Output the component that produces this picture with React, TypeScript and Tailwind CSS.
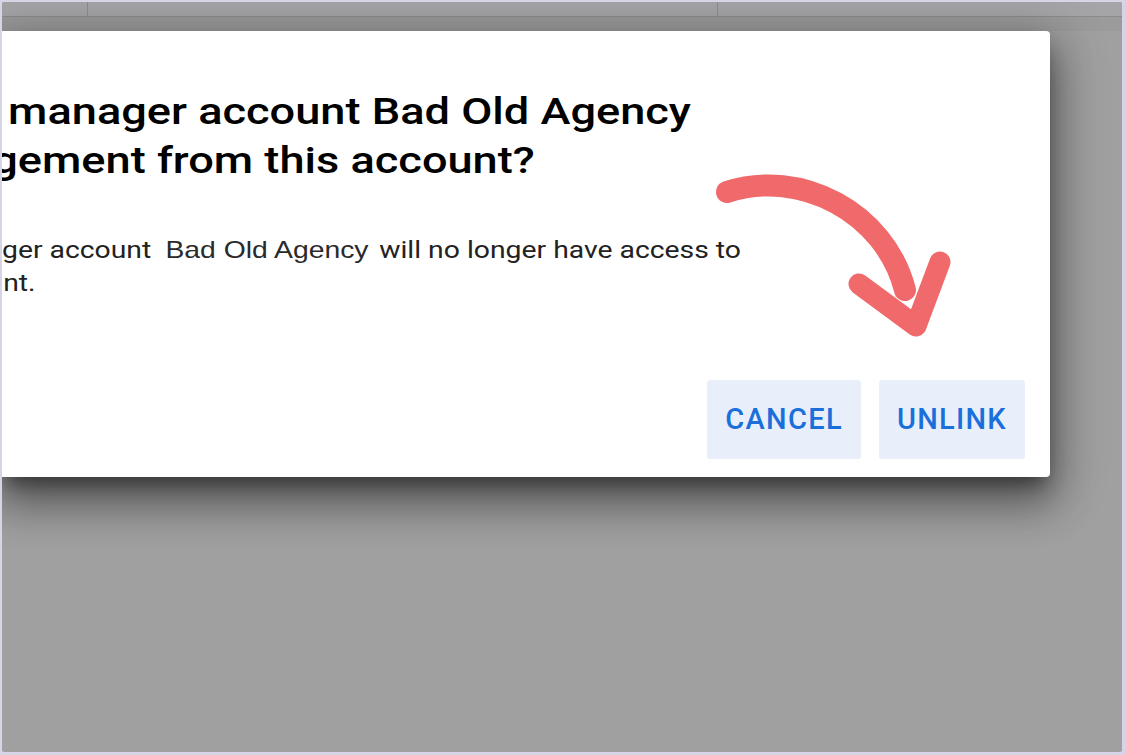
import React from "react";

const roboto = { fontFamily: "Roboto, 'Noto Sans', sans-serif" };

const ActionButton = ({ label }: { label: string }) => (
  <button className="h-[79px] px-[18px] flex items-center rounded-[3px] bg-[#e8effb] text-[#1b6fdb] text-[29px] font-medium tracking-[1.3px]">
    {label}
  </button>
);

const CurvedArrow = () => (
  <svg
    className="absolute left-0 top-0 pointer-events-none"
    width="1125"
    height="755"
    viewBox="0 0 1125 755"
    fill="none"
    aria-hidden="true"
  >
    <path
      d="M727 192 C 800 168, 885 212, 905 290"
      stroke="#f06a6c"
      strokeWidth={22}
      strokeLinecap="round"
    />
    <path
      d="M859 284 L 916 326 L 940 262"
      stroke="#f06a6c"
      strokeWidth={21}
      strokeLinecap="round"
      strokeLinejoin="round"
    />
  </svg>
);

export default function App() {
  return (
    <div
      className="relative w-[1125px] h-[755px] bg-[#d5d5e7] pl-[2px] pt-[2px] pr-[3px] pb-[3px]"
      style={roboto}
    >
      <div className="relative h-full overflow-hidden bg-[#a0a0a0] rounded-[2px] flex flex-col">
        {/* page header, dimmed */}
        <div className="h-[14px] flex bg-[#a5a5a7]">
          <div className="w-[86px] border-r border-[#8d8d8e]" />
          <div className="w-[630px] border-r border-[#8d8d8e]" />
          <div className="flex-1" />
        </div>
        <div className="h-px bg-[#8c8c8c]" />
        <div className="h-[14px] bg-[#9b9b9c]" />

        {/* dialog */}
        <div className="relative w-[1048px] bg-white rounded-r-[4px] pt-[56px] pb-[18px] pr-[25px] shadow-[0_12px_18px_-6px_rgba(0,0,0,0.45),0_26px_40px_4px_rgba(0,0,0,0.3),0_10px_50px_10px_rgba(0,0,0,0.22)]">
          <div className="text-[37px] leading-[49px] font-medium text-black whitespace-nowrap origin-left scale-x-[1.22]">
            <div className="pl-[5px]">manager account Bad Old Agency</div>
            <div className="-ml-[8px]">gement from this account?</div>
          </div>

          <div className="mt-[48px] text-[24px] leading-[33px] text-[#222222] whitespace-nowrap origin-left scale-x-[1.18]">
            <div className="flex items-baseline">
              <span>ger account</span>
              <span
                className="ml-[12px] text-[24px] text-[#2a2a2a]"
                style={{ fontFamily: "'Liberation Sans', Arial, sans-serif" }}
              >
                Bad Old Agency
              </span>
              <span className="ml-[9px]">will no longer have access to</span>
            </div>
            <div className="pl-[1px]">nt.</div>
          </div>

          <div className="mt-[80px] flex justify-end gap-[18px]">
            <ActionButton label="CANCEL" />
            <ActionButton label="UNLINK" />
          </div>
        </div>
      </div>
      <CurvedArrow />
    </div>
  );
}
